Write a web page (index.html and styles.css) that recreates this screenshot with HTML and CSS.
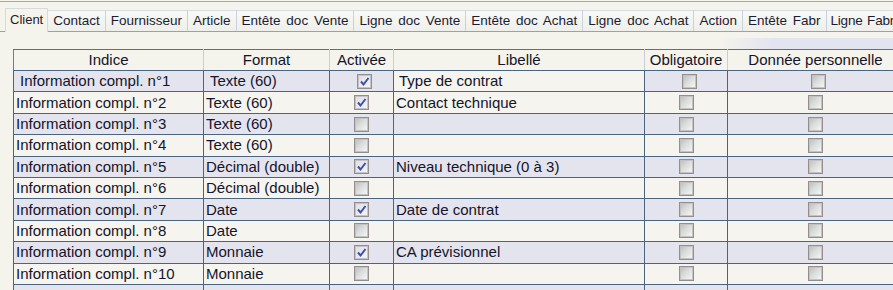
FILE: index.html
```html
<!DOCTYPE html>
<html>
<head>
  <title>Informations complémentaires</title>
  <link rel="stylesheet" href="styles.css">
</head>
<body>
  <div class="window">
    <div class="tabs">
      <div class="tab active">Client</div>
      <div class="tab">Contact</div>
      <div class="tab">Fournisseur</div>
      <div class="tab">Article</div>
      <div class="tab">Entête doc Vente</div>
      <div class="tab">Ligne doc Vente</div>
      <div class="tab">Entête doc Achat</div>
      <div class="tab">Ligne doc Achat</div>
      <div class="tab">Action</div>
      <div class="tab">Entête Fabr</div>
      <div class="tab">Ligne Fabr</div>
    </div>

    <div class="panel">
      <div class="shade"></div>
      <table class="grid">
        <colgroup>
          <col class="c-indice">
          <col class="c-format">
          <col class="c-active">
          <col class="c-libelle">
          <col class="c-oblig">
          <col class="c-perso">
        </colgroup>
        <thead>
          <tr>
            <th>Indice</th>
            <th>Format</th>
            <th>Activée</th>
            <th>Libellé</th>
            <th>Obligatoire</th>
            <th>Donnée personnelle</th>
          </tr>
        </thead>
        <tbody id="rows"></tbody>
      </table>
    </div>
  </div>

  <script>
    const rows = [
      { format: 'Texte (60)', active: true, label: 'Type de contrat' },
      { format: 'Texte (60)', active: true, label: 'Contact technique' },
      { format: 'Texte (60)', active: false, label: '' },
      { format: 'Texte (60)', active: false, label: '' },
      { format: 'Décimal (double)', active: true, label: 'Niveau technique (0 à 3)' },
      { format: 'Décimal (double)', active: false, label: '' },
      { format: 'Date', active: true, label: 'Date de contrat' },
      { format: 'Date', active: false, label: '' },
      { format: 'Monnaie', active: true, label: 'CA prévisionnel' },
      { format: 'Monnaie', active: false, label: '' }
    ];

    const check = '<svg viewBox="0 0 13 13" width="13" height="13"><path d="M3 6.5 L5.5 9.5 L10.5 3" fill="none" stroke="#3a50a8" stroke-width="2"/></svg>';
    const tbody = document.getElementById('rows');

    function box(checked) {
      return checked ? `<span class="cb on">${check}</span>` : '<span class="cb"></span>';
    }

    rows.forEach((row, index) => {
      const tr = document.createElement('tr');
      if (index === 0) tr.className = 'current';
      tr.innerHTML = `
        <td>Information compl. n°${index + 1}</td>
        <td>${row.format}</td>
        <td class="mid">${box(row.active)}</td>
        <td class="label">${row.label}</td>
        <td class="mid">${box(false)}</td>
        <td class="mid">${box(false)}</td>
      `;
      tbody.appendChild(tr);
    });

    // la ligne suivante, coupée en bas
    const last = document.createElement('tr');
    last.innerHTML = '<td></td><td></td><td></td><td class="label"></td><td></td><td></td>';
    tbody.appendChild(last);
  </script>
</body>
</html>
```

FILE: styles.css
```css
* {
  box-sizing: border-box;
}

body {
  margin: 0;
  background-color: #f4f3ec;
  font-family: "Liberation Sans", Arial, sans-serif;
  color: #14142a;
}

.window {
  width: 893px;
  height: 290px;
  overflow: hidden;
  border-top: 1px solid #a9a9a6;
  margin-top: 1px;
}

/* onglets */
.tabs {
  display: flex;
  align-items: flex-end;
  padding-left: 5px;
  margin-top: 6px;
  border-bottom: 1px solid #8ea3bd;
  height: 24px;
  white-space: nowrap;
}

.tab {
  height: 21px;
  line-height: 19px;
  padding: 0 5px;
  font-size: 13.5px;
  word-spacing: 2px;
  color: #1c1c30;
  border-top: 1px solid #d6dde6;
  border-right: 1px solid #c8d2de;
  background: linear-gradient(#f8f8f4, #eeefea);
  flex-shrink: 0;
}

.tab:last-child {
  padding: 0 0 0 4px;
  letter-spacing: -0.2px;
  word-spacing: 1px;
}

.tab.active {
  height: 24px;
  line-height: 22px;
  margin-bottom: -1px;
  padding: 0 4px;
  font-size: 13px;
  background: #f4f3ec;
  border: 1px solid #d4dae2;
  border-bottom: none;
}

/* grille */
.panel {
  position: relative;
  padding: 17px 0 0 13px;
}

.shade {
  position: absolute;
  top: 6px;
  left: 720px;
  width: 180px;
  height: 11px;
  background: linear-gradient(90deg, rgba(226, 228, 240, 0), #e2e4f0 30%);
}

.grid {
  border-collapse: collapse;
  table-layout: fixed;
  width: 890px;
  font-size: 15px;
}

.c-indice { width: 190px; }
.c-format { width: 126px; }
.c-active { width: 64px; }
.c-libelle { width: 251px; }
.c-oblig { width: 83px; }
.c-perso { width: 176px; }

.grid th {
  font-weight: normal;
  height: 21px;
  line-height: 18px;
  padding: 0;
  text-align: center;
  border: 1px solid #c9ced6;
  border-top: 1px solid #5f7078;
  border-bottom: 1px solid #4b6580;
  background: #f4f3ec;
}

.grid th:first-child {
  border-left: 1px solid #6f7f86;
}

.grid td {
  height: 21.4px;
  line-height: 18px;
  padding: 0 2px;
  border: 1px solid #4b6580;
  white-space: nowrap;
  overflow: hidden;
}

.grid tbody tr:nth-child(odd) td {
  background: #e3e4ee;
}

.grid tbody tr:nth-child(even) td {
  background: #f5f4ee;
}

.grid tr.current td {
  padding-left: 6px;
}

.grid tr.current td.label {
  background: #f5f4ee;
  padding-left: 5px;
}

.grid td.mid {
  text-align: center;
  padding: 0;
}

/* cases à cocher */
.cb {
  display: inline-block;
  width: 15px;
  height: 15px;
  vertical-align: middle;
  margin-top: -2px;
  border: 1px solid #948e8e;
  box-shadow: inset 0 0 0 1px #c4c2c2;
  background: linear-gradient(135deg, #b9bcbc 0%, #dadddb 45%, #f8f8f8 100%);
}

.cb.on {
  background: linear-gradient(135deg, #dcdce6, #f6f6fa);
}

.cb svg {
  display: block;
  margin: 0;
}
```
